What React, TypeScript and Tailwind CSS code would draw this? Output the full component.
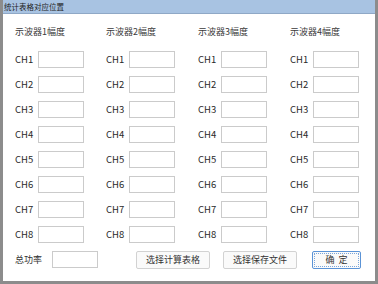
const CN = "font-['Microsoft_YaHei','Noto_Sans_CJK_SC',sans-serif]";

const columns = [
  { title: "示波器1幅度", w: "w-[91px]" },
  { title: "示波器2幅度", w: "w-[92px]" },
  { title: "示波器3幅度", w: "w-[92px]" },
  { title: "示波器4幅度", w: "w-[80px]" },
];
const channels = ["CH1", "CH2", "CH3", "CH4", "CH5", "CH6", "CH7", "CH8"];

function Field() {
  return <input type="text" className="w-[46px] h-[17px] border border-[#cbcbcb] bg-white outline-none" />;
}

export default function App() {
  return (
    <div className="w-[378px] h-[284px] bg-white border-x-[3px] border-b-[3px] border-[#8c8c8c] flex flex-col text-[#3a3a3a]">
      {/* タイトルバー */}
      <div className={`h-[14px] bg-[#a8c3e2] border-b border-[#8fa8c6] pl-[1px] text-[7.5px] leading-[14px] text-[#222] ${CN}`}>
        统计表格对应位置
      </div>

      {/* 入力欄 */}
      <div className="flex pl-[12px] pt-[11px]">
        {columns.map((col) => (
          <div key={col.title} className={`${col.w} shrink-0 flex flex-col`}>
            <div className={`h-[14px] text-[9px] leading-[14px] ${CN}`}>{col.title}</div>
            <div className="h-[8px]" />
            {channels.map((ch) => (
              <div key={ch} className="h-[25px] flex items-center">
                <span className={`w-[23px] text-[9.5px] text-[#2a2a2a] ${CN}`}>{ch}</span>
                <Field />
              </div>
            ))}
          </div>
        ))}
      </div>

      {/* 下段 */}
      <div className="h-[25px] flex items-center pl-[12px]">
        <span className={`w-[37px] text-[9px] text-[#333] ${CN}`}>总功率</span>
        <Field />
        <button className={`ml-[38px] w-[74px] h-[18px] bg-[#fafafa] border border-[#d2d2d2] rounded-[2px] text-[9px] text-[#333] ${CN}`}>
          选择计算表格
        </button>
        <button className={`ml-[13px] w-[74px] h-[18px] bg-[#fafafa] border border-[#d2d2d2] rounded-[2px] text-[9px] text-[#333] ${CN}`}>
          选择保存文件
        </button>
        <button className={`ml-[15px] w-[49px] h-[18px] bg-[#fafafa] border border-[#5b93d6] rounded-[2px] p-[1px] text-[9px] text-[#333] ${CN}`}>
          <span className="flex h-full items-center justify-center border border-dotted border-[#7aa6db] whitespace-pre">确  定</span>
        </button>
      </div>
    </div>
  );
}
